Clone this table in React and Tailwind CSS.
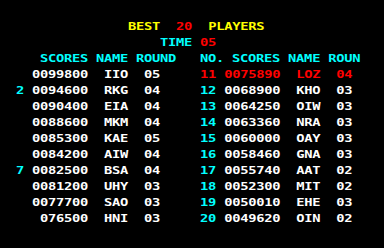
const Y = 'text-[#ffff00]';
const R = 'text-[#ff0000]';
const C = 'text-[#00ffff]';
const W = 'text-[#ffffff]';

const left = [
  ['', '0099800', 'IIO', '05'],
  ['2', '0094600', 'RKG', '04'],
  ['', '0090400', 'EIA', '04'],
  ['', '0088600', 'MKM', '04'],
  ['', '0085300', 'KAE', '05'],
  ['', '0084200', 'AIW', '04'],
  ['7', '0082500', 'BSA', '04'],
  ['', '0081200', 'UHY', '03'],
  ['', '0077700', 'SAO', '03'],
  ['', ' 076500', 'HNI', '03'],
];

const right = [
  ['11', '0075890', 'LOZ', '04'],
  ['12', '0068900', 'KHO', '03'],
  ['13', '0064250', 'OIW', '03'],
  ['14', '0063360', 'NRA', '03'],
  ['15', '0060000', 'OAY', '03'],
  ['16', '0058460', 'GNA', '03'],
  ['17', '0055740', 'AAT', '02'],
  ['18', '0052300', 'MIT', '02'],
  ['19', '0050010', 'EHE', '03'],
  ['20', '0049620', 'OIN', '02'],
];

// one text row on the 8px character grid
function Line({ parts }) {
  return (
    <div className="h-4 whitespace-pre origin-left scale-x-125 tracking-[-0.22px]">
      {parts.map(([t, c], i) => (
        <span key={i} className={c}>{t}</span>
      ))}
    </div>
  );
}

export default function App() {
  return (
    <div
      className="w-[384px] h-[248px] bg-black overflow-hidden pt-[19px] text-[11px] leading-4 font-bold"
      style={{ fontFamily: '"DejaVu Sans Mono", monospace' }}
    >
      <Line parts={[['                ', W], ['BEST', Y], ['  ', W], ['20', R], ['  ', W], ['PLAYERS', Y]]} />
      <Line parts={[['                    ', W], ['TIME', C], [' ', W], ['05', R]]} />
      <Line parts={[['     SCORES NAME ROUND   NO. SCORES NAME ROUN', C]]} />
      {left.map((l, i) => {
        const r = right[i];
        const rc = i === 0 ? R : W;
        return (
          <Line
            key={i}
            parts={[
              [' ' + l[0].padStart(2, ' ') + ' ', C],
              [l[1] + '  ' + l[2] + '  ' + l[3], W],
              ['     ', W],
              [r[0] + ' ', i === 0 ? R : C],
              [r[1] + '  ' + r[2] + '  ' + r[3], rc],
            ]}
          />
        );
      })}
    </div>
  );
}
